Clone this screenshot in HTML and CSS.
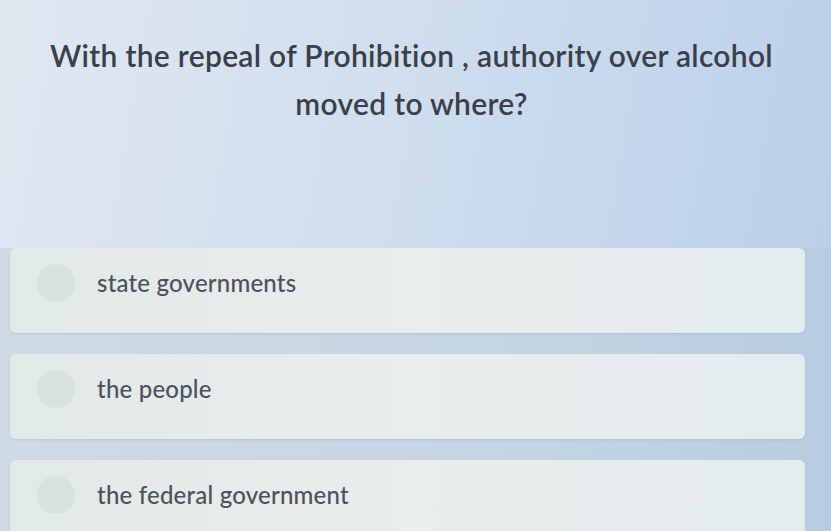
FILE: index.html
```html
<!DOCTYPE html>
<html lang="en">
<head>
<meta charset="UTF-8">
<meta name="viewport" content="width=device-width, initial-scale=1.0">
<title>quiz</title>
<link rel="stylesheet" href="styles.css">
</head>
<body>
    <div class="quiz">
        <div class="question">
            <p>With the repeal of Prohibition , authority over alcohol<br>moved to where?</p>
        </div>
        <div class="answers">
            <div class="answer">
                <span class="dot"></span>
                <span class="label">state governments</span>
            </div>
            <div class="answer">
                <span class="dot"></span>
                <span class="label">the people</span>
            </div>
            <div class="answer">
                <span class="dot"></span>
                <span class="label">the federal government</span>
            </div>
        </div>
    </div>
</body>
</html>
```

FILE: styles.css
```css
html, body {
    height: 100%;
}
body {
    margin: 0;
    padding: 0;
    font-family: Lato, "Open Sans", sans-serif;
    background: linear-gradient(100deg, #e0e8f1 0%, #d0deee 45%, #b8cfe9 100%);
    overflow: hidden;
}
.quiz {
    display: flex;
    flex-direction: column;
}
.question {
    height: 248px;
    box-sizing: border-box;
    padding-top: 31px;
}
.question p {
    margin: 0;
    text-align: center;
    font-size: 30px;
    line-height: 48px;
    font-weight: 600;
    letter-spacing: 0.3px;
    color: #3a3f4b;
    padding-right: 8px;
}
.answers {
    display: flex;
    flex-direction: column;
    gap: 21px;
    padding: 0 26px 0 10px;
    background: linear-gradient(90deg, #cedbe4 0%, #c6d5e3 60%, #b8cce1 100%);
}
.answer {
    display: flex;
    align-items: center;
    height: 85px;
    box-sizing: border-box;
    padding: 0 0 16px 27px;
    border-radius: 6px;
    background: linear-gradient(90deg, #e2e9e9 0%, #e8eeed 50%, #e5ecee 100%);
    box-shadow: 0 1px 2px rgba(120, 140, 160, 0.25);
}
.dot {
    width: 38px;
    height: 38px;
    border-radius: 50%;
    background: #d8e0e0;
    margin-right: 22px;
}
.label {
    font-size: 24px;
    letter-spacing: 0.2px;
    color: #4d525a;
    font-weight: 500;
}
```
